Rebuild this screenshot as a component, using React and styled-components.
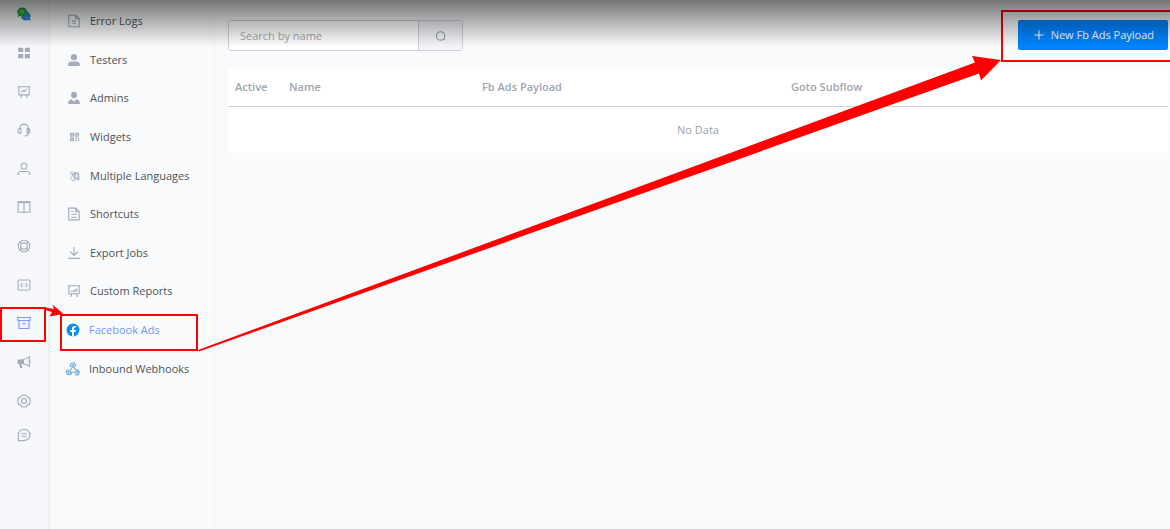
import React from 'react';
import styled, { createGlobalStyle, css } from 'styled-components';

const GlobalStyle = createGlobalStyle`
  * { box-sizing: border-box; }
  body {
    margin: 0;
    background: #f9fafc;
    font-family: "Open Sans", "Noto Sans", sans-serif;
    font-size: 11px;
    line-height: 16px;
    color: #505357;
  }
  a { color: inherit; text-decoration: none; }
`;

const Page = styled.div`
  position: relative;
  display: flex;
  min-height: 100vh;
  overflow: hidden;
`;

const TopShade = styled.div`
  position: absolute;
  z-index: 3;
  top: 0;
  left: 0;
  right: 0;
  height: 47px;
  background: linear-gradient(rgba(0, 0, 0, 0.53), rgba(0, 0, 0, 0));
  pointer-events: none;
`;

const Rail = styled.nav`
  flex: none;
  display: flex;
  flex-direction: column;
  width: 50px;
  background: #f5f7fa;
  border-right: 2px solid #eff1f4;
`;

const RailList = styled.div`
  display: grid;
  grid-template-rows: repeat(11, 1fr);
  height: 425px;
  margin-top: -5px;
`;

const RailLink = styled.a`
  position: relative;
  display: flex;
  align-items: center;
  justify-content: center;
  color: ${(p) => (p.$active ? '#7ba0fb' : '#a3abba')};
`;

const RailFooter = styled.div`
  display: grid;
  height: 30px;
`;

const Sidebar = styled.nav`
  flex: none;
  width: 165px;
  border-right: 1px solid #f3f4f7;
`;

const Menu = styled.ul`
  display: grid;
  grid-template-rows: repeat(10, 1fr);
  height: 386px;
  margin: 2px 0 0;
  padding: 0;
  list-style: none;
`;

const MenuItem = styled.li`
  position: relative;
  display: flex;
`;

const MenuLink = styled.a`
  display: flex;
  flex: 1;
  align-items: center;
  gap: 9px;
  padding-left: ${(p) => (p.$brand ? '16px' : '17px')};
  color: ${(p) => (p.$active ? '#6f96fb' : 'inherit')};
  white-space: nowrap;
  svg { color: #a3abba; }
`;

const Icon = styled.svg`
  flex: none;
  display: block;
  width: 14px;
  height: 14px;
  fill: none;
  stroke: currentColor;
  stroke-width: 1.1;
`;

const highlight = css`
  position: absolute;
  z-index: 2;
  border: 2px solid #fe0000;
  pointer-events: none;
`;

const RailHighlight = styled.span`
  ${highlight}
  inset: 3px 2px 1px 0;
`;

const MenuHighlight = styled.span`
  ${highlight}
  inset: 3px 16px -2px 10px;
`;

const ButtonHighlight = styled.span`
  ${highlight}
  inset: -10px -8px -12px -17px;
`;

const Arrows = styled.svg`
  position: absolute;
  z-index: 2;
  top: 0;
  left: 0;
  width: 1010px;
  height: 360px;
  fill: #fe0000;
  pointer-events: none;
`;

const Main = styled.main`
  flex: 1;
  min-width: 0;
  padding: 20px 2px 20px 13px;
`;

const Toolbar = styled.div`
  display: flex;
  align-items: flex-start;
  justify-content: space-between;
  margin-bottom: 18px;
`;

const SearchForm = styled.form`
  display: flex;
  width: 235px;
  height: 31px;
  background: #fff;
  border: 1px solid #cdd0d9;
  border-radius: 3px;
  overflow: hidden;
`;

const SearchInput = styled.input`
  flex: 1;
  min-width: 0;
  padding: 0 11px;
  border: 0;
  outline: 0;
  background: #fff;
  color: #505357;
  font: inherit;
  &::placeholder { color: #a3a8b3; opacity: 1; }
`;

const SearchButton = styled.button`
  display: flex;
  align-items: center;
  justify-content: center;
  width: 44px;
  padding: 0;
  border: 0;
  border-left: 1px solid #cdd0d9;
  background: #f4f5fa;
  color: #9298a4;
`;

const ButtonSlot = styled.div`
  position: relative;
`;

const PrimaryButton = styled.button`
  display: flex;
  align-items: center;
  gap: 5px;
  height: 30px;
  padding: 0 14px;
  border: 0;
  border-radius: 2px;
  background: #0084ff;
  color: #fff;
  font: inherit;
  font-weight: 500;
  white-space: nowrap;
`;

const Table = styled.table`
  width: 100%;
  table-layout: fixed;
  border-collapse: collapse;
  background: #fff;
`;

const HeadCell = styled.th`
  width: ${(p) => p.$width || 'auto'};
  height: 37px;
  padding: 0 7px;
  border-bottom: 1px solid #cdd1db;
  color: #9ea5b3;
  font-weight: 600;
  text-align: left;
`;

const EmptyCell = styled.td`
  height: 47px;
  padding: 0;
  color: #9a9fa9;
  text-align: center;
`;

const glyphs = {
  logo: (
    <g stroke="none">
      <path fill="#2a86dc" d="M8 4.200a5.300 4.900 0 0 1 5 7l.8 2.300-2.700-.5A5.400 4.700 0 0 1 4 10.500z" />
      <path fill="#22a637" d="M5 .4a4.800 4.500 0 1 1-1.400 8.700L.8 10l.5-2.400A4.700 4.500 0 0 1 5 .4z" />
      <path stroke="#a8dfad" strokeWidth=".8" d="M2.700 3.700h4.600M2.700 5.800h4.600" />
      <path stroke="#9ccbf5" strokeWidth=".7" d="M8.500 10.700h2.600" />
    </g>
  ),
  dashboard: <path stroke="none" fill="currentColor" d="M1.200 1.700h5v4.400h-5zM7.900 1.700h5v4.400h-5zM1.200 7.900h5v4.400h-5zM7.900 7.900h5v4.400h-5z" />,
  board: <path d="M.6 1.700h12.800M1.800 1.700v8.200h10.400V1.700M5 10l-1.200 3M9 10l1.200 3M4.200 7.300l2-1.800 1.300 1 2.300-2.400" />,
  headset: (
    <g>
      <path d="M2.600 6V5.500a4.400 4.400 0 0 1 8.800 0V10c0 2-1.700 2.900-3.900 2.900" />
      <path d="M3.900 5.600v4.500H2.800C.4 10.100.4 5.700 2.800 5.600zM10.100 5.600v4.500h1.100c2.400 0 2.400-4.400 0-4.500z" />
    </g>
  ),
  user: <path d="M7 7.200a3 3 0 1 0 0-6 3 3 0 0 0 0 6zM1.500 13v-1.200c0-1.400.9-2.300 2.300-2.300h6.400c1.400 0 2.300.9 2.300 2.300V13" />,
  columns: <path d="M1.100 1.900h11.800v10.300H1.100zM7 1.900v10.300M1.100 2.400h11.800" />,
  lifebuoy: (
    <g>
      <circle cx="7" cy="7" r="5.800" />
      <circle cx="7" cy="7" r="3.300" />
      <path d="M2.800 2.800l2 2M11.200 2.800l-2 2M2.800 11.200l2-2M11.200 11.200l-2-2" />
    </g>
  ),
  ratio: (
    <g>
      <rect x="1.100" y="2" width="11.800" height="10" rx="1.200" />
      <path d="M4.400 4.700v4.600M9.700 4.700v4.600M7 5.300v1.100M7 7.700v1.100" />
    </g>
  ),
  archive: <path strokeWidth="1.200" d="M.8 1.500h12.400v3H.8zM2 4.500v8h10v-8M5.300 7.600h3.400" />,
  megaphone: (
    <g>
      <path fill="currentColor" stroke="none" d="M.6 4.800L7 4v5.300l-2.600-.2.900 3.900H3.100L2 9 .6 8.700z" />
      <path d="M7 4.300c2-.4 3.600-1.300 5.300-2.700v9.800C10.600 10 9 9.300 7 9M12.900 5.300v2.400" />
    </g>
  ),
  gear: (
    <g>
      <path d="M4.600 1.300h4.800l.9 2 2.100.2L13.300 7l-.9 3.500-2.100.2-.9 2H4.600l-.9-2-2.100-.2L.7 7l.9-3.500 2.100-.2z" strokeLinejoin="round" />
      <circle cx="7" cy="7" r="2.500" />
    </g>
  ),
  chat: <path d="M1.300 12.600V7A5.800 5.700 0 1 1 7 12.600zM4.400 5.800h5.200M4.400 8.200h5.200" />,
  errorFile: <path d="M1.800 1.300h7l3.400 3.300v8.200H1.800zM8.600 1.300v3.500h3.600M5.300 6.400l3.400 3.800M8.700 6.400l-3.400 3.800" />,
  tester: <path stroke="none" fill="currentColor" d="M7 7.300a3.100 3.200 0 1 0 0-6.400 3.100 3.200 0 0 0 0 6.400zM1.200 12.900v-1.300c0-2 1.500-3.100 3.400-3.100h4.800c1.900 0 3.400 1.100 3.400 3.100v1.300z" />,
  admin: <path stroke="none" fill="currentColor" d="M7 7.300a3 3.300 0 1 0 0-6.600 3 3.300 0 0 0 0 6.600zM1.200 12.900v-1.200c0-1.900 1.400-2.900 3.500-3.500L7 10.800l2.300-2.600c2.100.6 3.500 1.600 3.500 3.500v1.200z" />,
  widgets: (
    <g strokeWidth="1">
      <path fill="currentColor" fillOpacity=".3" d="M3.500 3.200h3v3h-3zM8.200 3.200h3.400v3H8.200zM3.500 7.800h3v3h-3z" />
      <path d="M8.200 8h1.400v1.400M11.600 7.700v3.200M8 10.800h2.200M4.400 4.700h1.300M9.200 4.700h1.400M4.400 9.300h1.300" />
    </g>
  ),
  languages: (
    <g strokeWidth=".9">
      <path d="M3.300 5.200c0-2 .8-2.500 2.600-2.500M8 11.300c-2.300.7-4.300-.4-4.500-2.500M4.300 5h3.300M6 4.200V5c0 1.500-.7 2.500-1.800 3M5 5.800l2 2" />
      <path fill="currentColor" fillOpacity=".65" d="M7.400 3.300l4.400.9v6.600l-4.400-1z" />
      <path stroke="#f9fafc" strokeWidth=".7" d="M8.800 8.300l.8-2.600.8 3" />
    </g>
  ),
  textFile: <path d="M1.800 1.100h7l3.400 3.300v8.500H1.800zM8.600 1.100v3.500h3.600M4.200 7.300h5.600M4.200 10.200h5.600M4.200 4.500h2.200" />,
  download: <path d="M7 1v8.300M3.200 5.700L7 9.400l3.800-3.700M1.300 12.400h11.400" />,
  report: <path d="M.6 1.800h12.800M1.800 1.800v8h10.400v-8M4.800 9.900L3.300 13M9.200 9.900l1.500 3.100M4.600 8V6.800M6.300 8V6M8 8V5.200M9.700 8V4.200" />,
  facebook: (
    <g stroke="none">
      <circle cx="7" cy="7" r="6.500" fill="#128be0" />
      <path fill="#fff" d="M6 13.400V8.900H4.300V7H6V5.600c0-1.800 1-2.700 2.600-2.700l1.400.1v1.600h-.9c-.8 0-1.100.4-1.100 1.100V7h1.900l-.3 1.900H8v4.500z" />
    </g>
  ),
  webhook: (
    <g stroke="#67addf">
      <circle cx="7" cy="3.600" r="1.100" />
      <circle cx="3.200" cy="10.200" r="1.100" />
      <circle cx="10.800" cy="10.200" r="1.100" />
      <path d="M4.700 5A2.700 2.700 0 1 1 9.500 4.300M6.600 4.600L4 9.300M7.500 4.600l2.300 3.500a2.500 2.500 0 1 1-.9 3.900M2.700 7.600a2.600 2.600 0 1 0 3 2.600h4" />
    </g>
  ),
  search: (
    <g>
      <circle cx="6.600" cy="6.900" r="4.200" />
      <path d="M9.400 9.700l1.700 1.500" />
    </g>
  ),
  plus: <path d="M7 2.500v9M2.500 7h9" />,
};

const Glyph = ({ name }) => (
  <Icon viewBox="0 0 14 14" aria-hidden="true">{glyphs[name]}</Icon>
);

const railItems = [
  ['logo', 'Home'],
  ['dashboard', 'Dashboard'],
  ['board', 'Analytics'],
  ['headset', 'Support'],
  ['user', 'Contacts'],
  ['columns', 'Layout'],
  ['lifebuoy', 'Help'],
  ['ratio', 'Content'],
  ['archive', 'Tools'],
  ['megaphone', 'Broadcast'],
  ['gear', 'Settings'],
];

const menuItems = [
  ['errorFile', 'Error Logs'],
  ['tester', 'Testers'],
  ['admin', 'Admins'],
  ['widgets', 'Widgets'],
  ['languages', 'Multiple Languages'],
  ['textFile', 'Shortcuts'],
  ['download', 'Export Jobs'],
  ['report', 'Custom Reports'],
  ['facebook', 'Facebook Ads'],
  ['webhook', 'Inbound Webhooks'],
];

export default function App() {
  return (
    <>
      <GlobalStyle />
      <Page>
        <Rail aria-label="Sections">
          <RailList>
            {railItems.map(([name, label]) => (
              <RailLink key={name} href="#" aria-label={label} $active={name === 'archive'}>
                <Glyph name={name} />
                {name === 'archive' && <RailHighlight />}
              </RailLink>
            ))}
          </RailList>
          <RailFooter>
            <RailLink href="#" aria-label="Messages"><Glyph name="chat" /></RailLink>
          </RailFooter>
        </Rail>

        <Sidebar aria-label="Tools">
          <Menu>
            {menuItems.map(([name, label]) => (
              <MenuItem key={name}>
                <MenuLink
                  href="#"
                  $active={name === 'facebook'}
                  $brand={name === 'facebook' || name === 'webhook'}
                >
                  <Glyph name={name} />
                  {label}
                </MenuLink>
                {name === 'facebook' && <MenuHighlight />}
              </MenuItem>
            ))}
          </Menu>
        </Sidebar>

        <Main>
          <Toolbar>
            <SearchForm role="search" onSubmit={(e) => e.preventDefault()}>
              <SearchInput type="text" placeholder="Search by name" aria-label="Search by name" />
              <SearchButton type="submit" aria-label="Search"><Glyph name="search" /></SearchButton>
            </SearchForm>
            <ButtonSlot>
              <PrimaryButton type="button">
                <Glyph name="plus" />
                New Fb Ads Payload
              </PrimaryButton>
              <ButtonHighlight />
            </ButtonSlot>
          </Toolbar>
          <Table>
            <thead>
              <tr>
                <HeadCell $width="54px">Active</HeadCell>
                <HeadCell $width="193px">Name</HeadCell>
                <HeadCell $width="309px">Fb Ads Payload</HeadCell>
                <HeadCell>Goto Subflow</HeadCell>
              </tr>
            </thead>
            <tbody>
              <tr>
                <EmptyCell colSpan={4}>No Data</EmptyCell>
              </tr>
            </tbody>
          </Table>
        </Main>

        <Arrows viewBox="0 0 1010 360" aria-hidden="true">
          <path d="M45 307.500L54 309l-1.500-4.500L63.500 314 49.500 316.500l2.500-4.500-7-2z" />
          <path d="M198 350L975 62.500l-3-6.500 29 4-20 20.500-2-7L199 351.500z" />
        </Arrows>
        <TopShade />
      </Page>
    </>
  );
}
